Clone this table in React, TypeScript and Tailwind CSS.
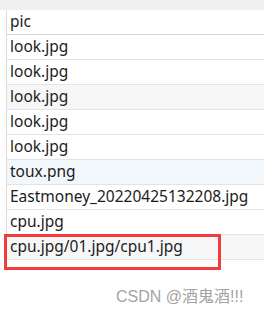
const rows = [
  { name: "pic", bg: "bg-white" },
  { name: "look.jpg", bg: "bg-white" },
  { name: "look.jpg", bg: "bg-white" },
  { name: "look.jpg", bg: "bg-[#f7f7f7]" },
  { name: "look.jpg", bg: "bg-white" },
  { name: "look.jpg", bg: "bg-white" },
  { name: "toux.png", bg: "bg-[#f2f7fc]" },
  { name: "Eastmoney_20220425132208.jpg", bg: "bg-white" },
  { name: "cpu.jpg", bg: "bg-white" },
  { name: "cpu.jpg/01.jpg/cpu1.jpg", bg: "bg-[#f7f7f7]" },
];

export default function App() {
  return (
    <div className="relative w-[264px] h-[314px] bg-white overflow-hidden font-['Noto_Sans',sans-serif] text-[#1c1c1c]">
      <div className="h-[10px] bg-[#f0f0f0]" />
      <div className="flex">
        <div className="w-[6px] shrink-0" />
        <div className="flex-1 border-l border-[#dcdcdc]">
          {rows.map((r, i) => (
            <div
              key={i}
              className={`h-[25px] flex items-center pl-[3px] text-[15.5px] border-b ${
                i === 0 ? "border-[#d4d4d4]" : "border-[#e4e4e4]"
              } ${r.bg}`}
            >
              {r.name}
            </div>
          ))}
        </div>
      </div>
      <div className="absolute left-[4px] top-[234px] w-[217px] h-[36px] border-[3px] border-[#f23c3c]" />
      <div className="absolute left-[116px] top-[285px] text-[16px] text-[#a3a3a3] font-['Liberation_Sans','Noto_Sans_CJK_SC',sans-serif]">
        CSDN @酒鬼酒!!!
      </div>
    </div>
  );
}
